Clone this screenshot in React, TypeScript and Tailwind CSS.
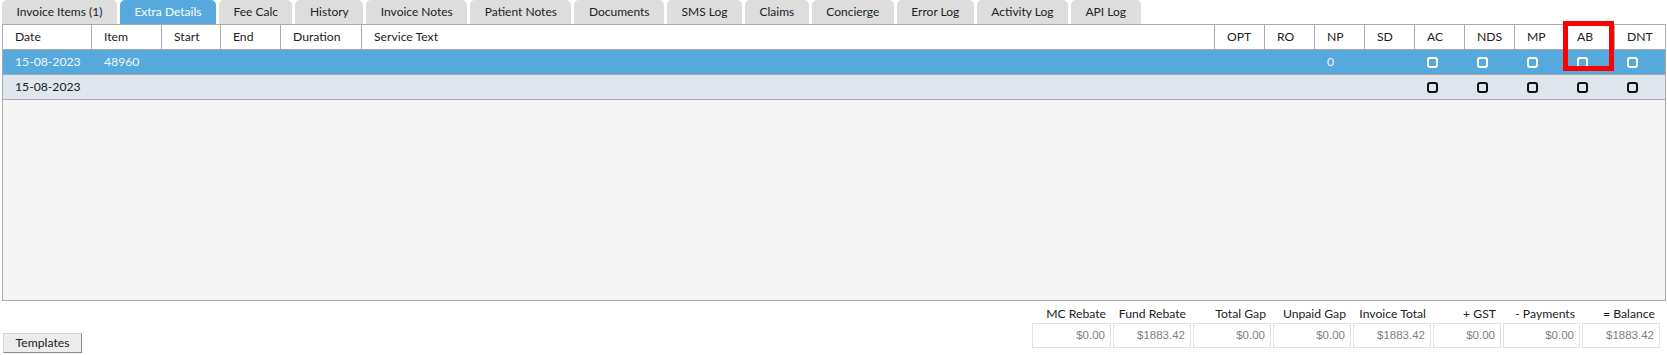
import React from "react";

const tabs = [
  "Invoice Items (1)",
  "Extra Details",
  "Fee Calc",
  "History",
  "Invoice Notes",
  "Patient Notes",
  "Documents",
  "SMS Log",
  "Claims",
  "Concierge",
  "Error Log",
  "Activity Log",
  "API Log",
];

const columns = [
  "Date",
  "Item",
  "Start",
  "End",
  "Duration",
  "Service Text",
  "OPT",
  "RO",
  "NP",
  "SD",
  "AC",
  "NDS",
  "MP",
  "AB",
  "DNT",
];

const totals = [
  { label: "MC Rebate", value: "$0.00", w: "w-[79px]" },
  { label: "Fund Rebate", value: "$1883.42", w: "w-[78px]" },
  { label: "Total Gap", value: "$0.00", w: "w-[78px]" },
  { label: "Unpaid Gap", value: "$0.00", w: "w-[78px]" },
  { label: "Invoice Total", value: "$1883.42", w: "w-[78px]" },
  { label: "+ GST", value: "$0.00", w: "w-[68px]" },
  { label: "- Payments", value: "$0.00", w: "w-[77px]" },
  { label: "= Balance", value: "$1883.42", w: "w-[78px]" },
];

const gridCols =
  "grid grid-cols-[89px_70px_59px_60px_81px_1fr_50px_50px_50px_50px_50px_50px_50px_50px_50px]";

function Box({ dark }: { dark?: boolean }) {
  return (
    <span
      className={
        dark
          ? "block w-[11px] h-[11px] rounded-[3px] border-[2.5px] border-[#111]"
          : "block w-[11px] h-[11px] rounded-[3px] border-2 border-white"
      }
    />
  );
}

function Row({
  date,
  item,
  np,
  selected,
}: {
  date: string;
  item?: string;
  np?: string;
  selected?: boolean;
}) {
  const cells: React.ReactNode[] = [date, item, null, null, null, null, null, null, np, null];
  return (
    <div
      className={
        gridCols +
        " h-[25px] border-b border-[#aaa] " +
        (selected ? "bg-[#55a9dc] text-[#f2f7fb]" : "bg-[#dfe6ee] text-[#222]")
      }
    >
      {cells.map((c, i) => (
        <div key={i} className="pl-[12px] flex items-center">
          {c}
        </div>
      ))}
      {[0, 1, 2, 3, 4].map((i) => (
        <div key={"b" + i} className="pl-[12px] flex items-center">
          <Box dark={!selected} />
        </div>
      ))}
    </div>
  );
}

export default function App() {
  return (
    <div className="relative w-[1667px] h-[355px] bg-white text-[12.2px] text-[#222] font-['Lato','Liberation_Sans',sans-serif] overflow-hidden">
      {/* tab strip */}
      <div className="flex gap-[3px] pl-[2px] h-[24px] text-[12px]">
        {tabs.map((t, i) => (
          <div
            key={t}
            className={
              "px-[14.5px] rounded-t-[5px] leading-[24px] whitespace-nowrap " +
              (i === 1 ? "bg-[#55a9dc] text-white" : "bg-[#dddddd] text-[#222]")
            }
          >
            {t}
          </div>
        ))}
      </div>

      {/* items panel */}
      <div className="ml-[2px] w-[1664px] h-[277px] border border-[#aaa] bg-[#f5f5f5]">
        <div className={gridCols + " h-[25px] bg-white border-b border-[#aaa]"}>
          {columns.map((c, i) => (
            <div
              key={c}
              className={
                "pl-[12px] flex items-center " +
                (i < columns.length - 1 ? "border-r border-[#aaa]" : "")
              }
            >
              {c}
            </div>
          ))}
        </div>
        <Row date="15-08-2023" item="48960" np="0" selected />
        <Row date="15-08-2023" />
      </div>

      {/* footer */}
      <div className="flex justify-between items-end h-[54px]">
        <button className="ml-[3px] mb-[2px] w-[79px] h-[20px] bg-[#ececec] border border-t-[#d6d6d6] border-l-[#d6d6d6] border-b-[#8a8a8a] border-r-[#8a8a8a] text-[12.2px] text-[#222] leading-none">
          Templates
        </button>
        <div className="mr-[7px] mb-[7px] flex gap-[2px]">
          {totals.map((t) => (
            <div key={t.label} className={t.w + " flex flex-col"}>
              <div className="h-[18px] text-right pr-[5px] whitespace-nowrap leading-[18px]">
                {t.label}
              </div>
              <div className="h-[25px] border border-[#e2e2e2] bg-white flex items-center justify-end pr-[5px] text-[11.5px] text-[#808080] font-['Liberation_Sans',sans-serif]">
                {t.value}
              </div>
            </div>
          ))}
        </div>
      </div>

      {/* highlight box */}
      <div className="absolute left-[1563px] top-[21px] w-[51px] h-[50px] border-[5px] border-[#ff0000]" />
    </div>
  );
}
